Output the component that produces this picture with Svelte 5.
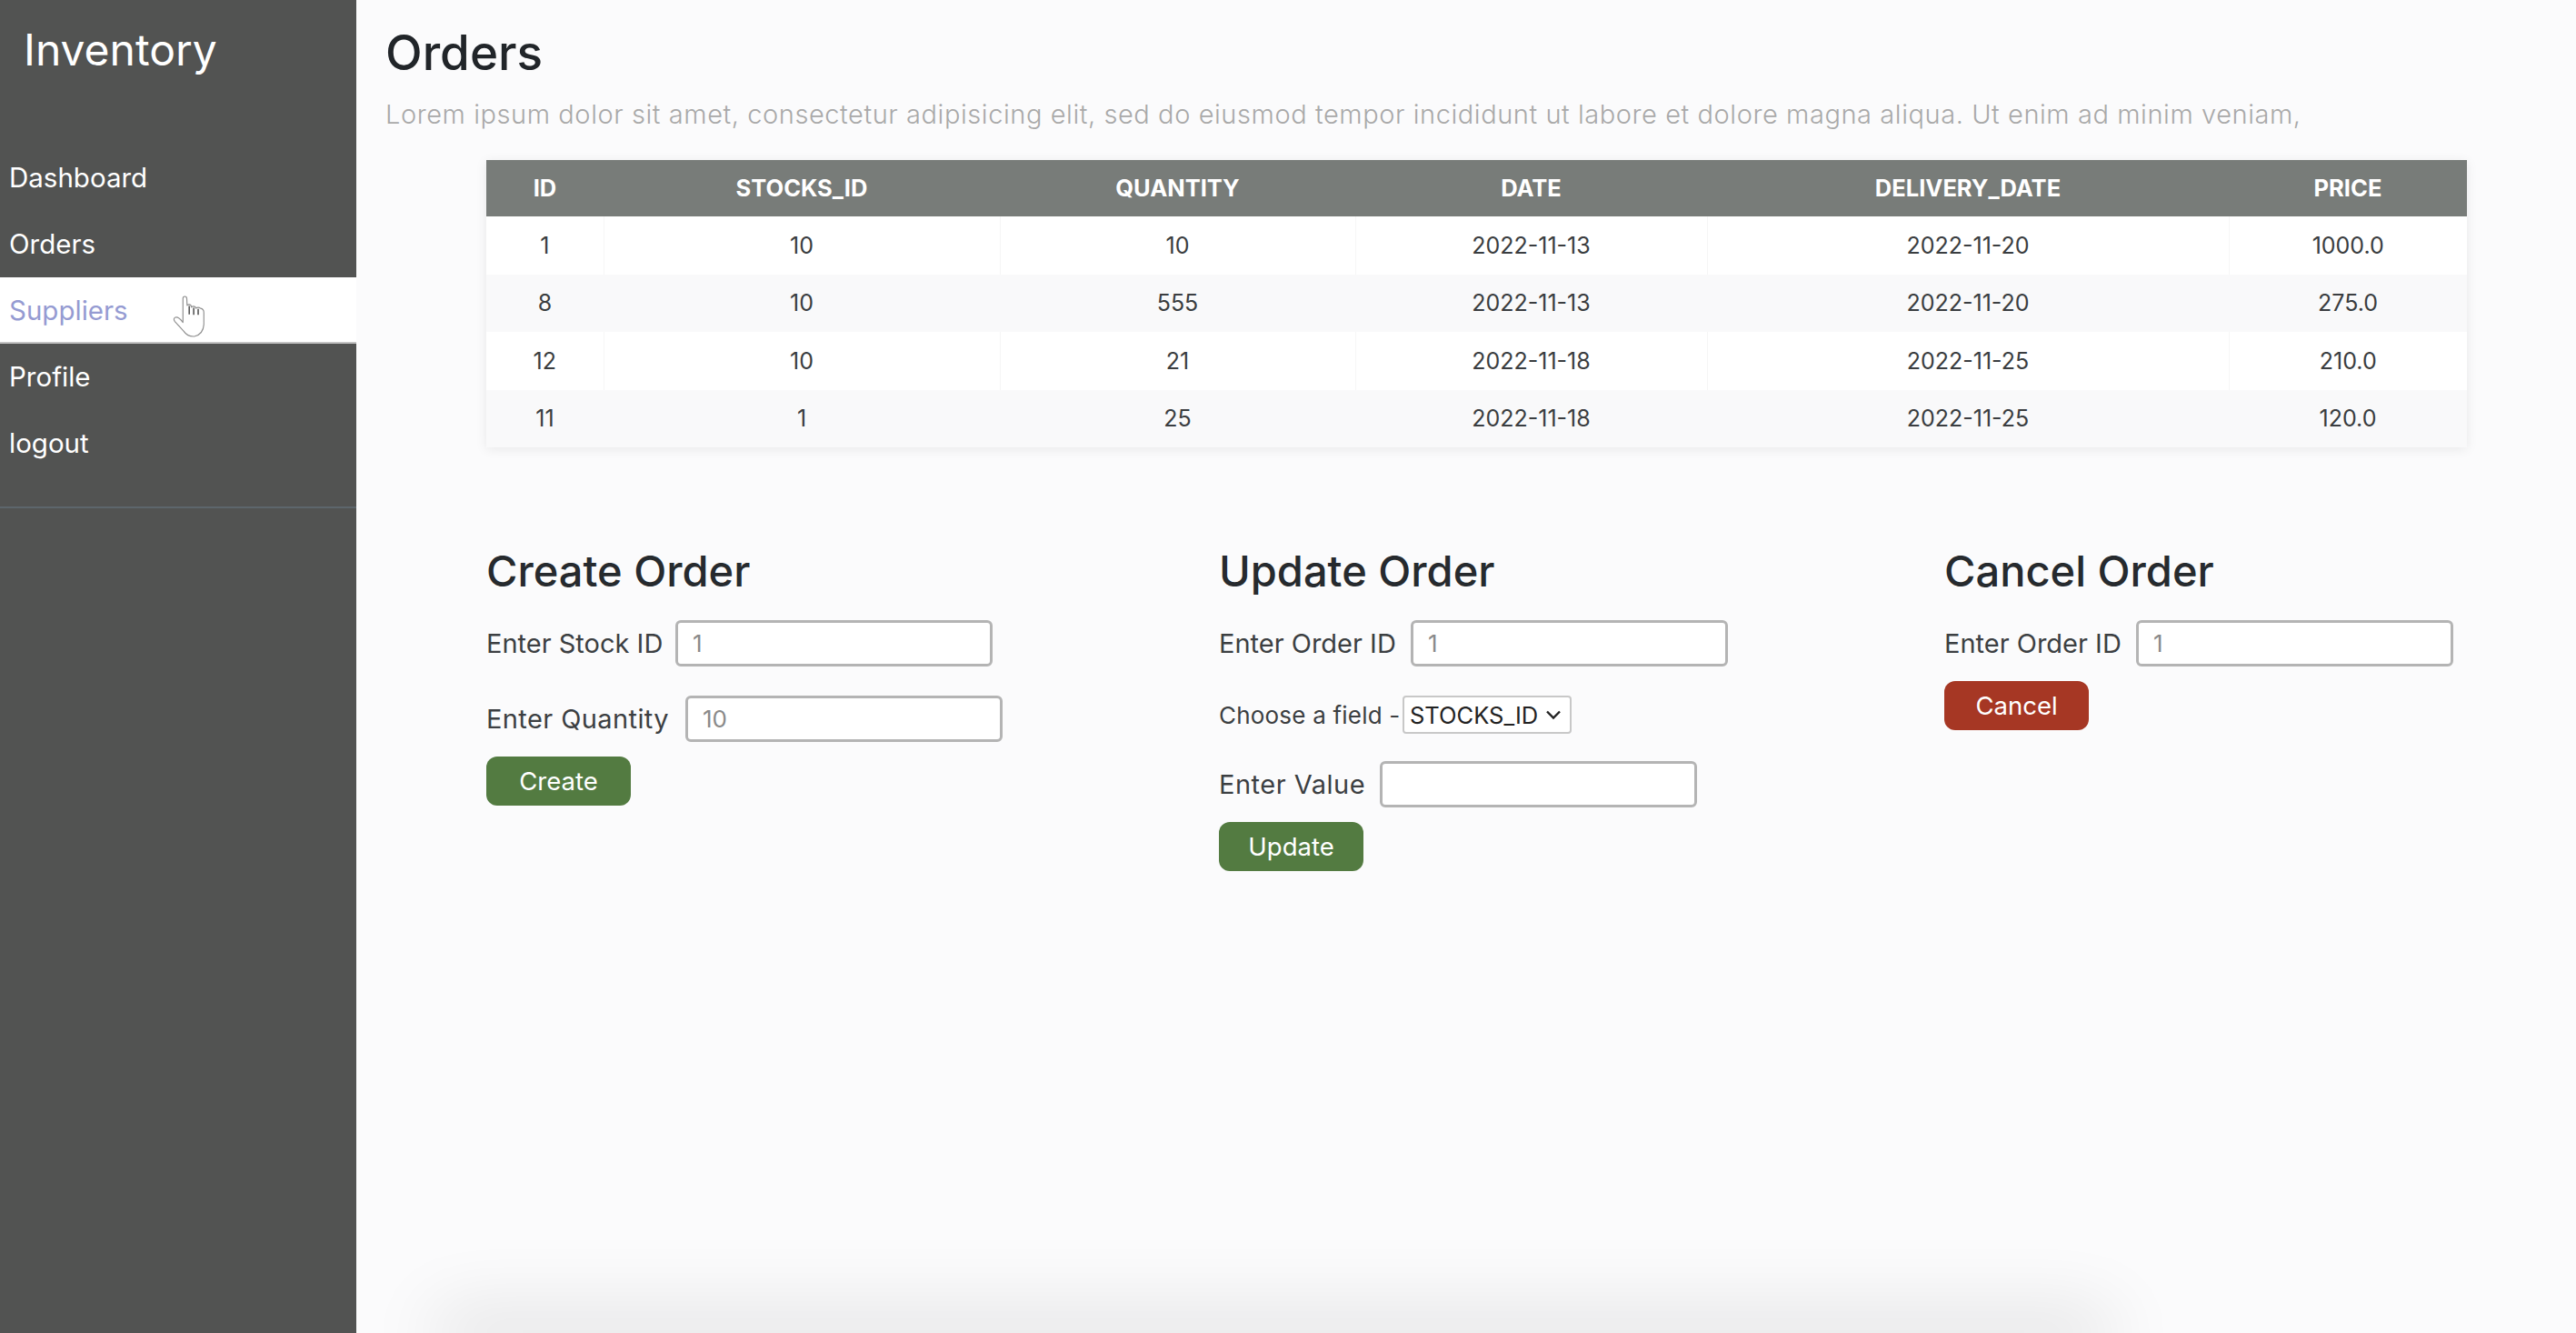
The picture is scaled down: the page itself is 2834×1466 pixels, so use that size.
<script>
	const navItems = ['Dashboard', 'Orders', 'Suppliers', 'Profile', 'logout'];
	const columns = ['ID', 'STOCKS_ID', 'QUANTITY', 'DATE', 'DELIVERY_DATE', 'PRICE'];
	const orders = [
		{ id: 1, stock: 10, qty: 10, date: '2022-11-13', delivery: '2022-11-20', price: '1000.0' },
		{ id: 8, stock: 10, qty: 555, date: '2022-11-13', delivery: '2022-11-20', price: '275.0' },
		{ id: 12, stock: 10, qty: 21, date: '2022-11-18', delivery: '2022-11-25', price: '210.0' },
		{ id: 11, stock: 1, qty: 25, date: '2022-11-18', delivery: '2022-11-25', price: '120.0' }
	];
</script>

<div class="layout">
	<aside class="sidebar">
		<div class="brand">Inventory</div>
		<nav>
			{#each navItems as item}
				<a href="#top" class="nav-item" class:active={item === 'Suppliers'}>
					{item}
					{#if item === 'Suppliers'}
						<!-- mouse pointer caught in the screenshot -->
						<svg class="cursor" viewBox="60 72 112 146" width="37" height="48">
							<path
								d="M97 86 Q97 78 103 78 Q110 78 110 86 L111 108 Q118 102 124 108 L125 114 Q132 108 139 114 L140 118 Q148 112 156 118 Q167 120 167 132 L167 172 Q165 205 135 212 Q112 213 100 195 L70 162 Q63 152 72 148 Q82 145 97 165 Z"
								fill="#fff"
								stroke="#8f8f8f"
								stroke-width="3.5"
								stroke-linejoin="round"
							/>
							<path d="M118 110 V138 M133 116 V140 M148 120 V140" fill="none" stroke="#333" stroke-width="4" />
						</svg>
					{/if}
				</a>
			{/each}
		</nav>
		<hr />
	</aside>

	<main class="content">
		<h1>Orders</h1>
		<p class="lead">Lorem ipsum dolor sit amet, consectetur adipisicing elit, sed do eiusmod tempor incididunt ut labore et dolore magna aliqua. Ut enim ad minim veniam,</p>

		<div class="inner">
			<table>
				<thead>
					<tr>
						{#each columns as col}
							<th>{col}</th>
						{/each}
					</tr>
				</thead>
				<tbody>
					{#each orders as o}
						<tr>
							<td>{o.id}</td>
							<td>{o.stock}</td>
							<td>{o.qty}</td>
							<td>{o.date}</td>
							<td>{o.delivery}</td>
							<td>{o.price}</td>
						</tr>
					{/each}
				</tbody>
			</table>

			<section class="forms">
				<form>
					<h2>Create Order</h2>
					<div class="field">
						<label class="stock" for="stock">Enter Stock ID</label>
						<input id="stock" placeholder="1" />
					</div>
					<div class="field">
						<label class="quantity" for="qty">Enter Quantity</label>
						<input id="qty" placeholder="10" />
					</div>
					<button type="button" class="btn green">Create</button>
				</form>

				<form>
					<h2>Update Order</h2>
					<div class="field">
						<label class="order" for="order">Enter Order ID</label>
						<input id="order" placeholder="1" />
					</div>
					<div class="field pick">
						<label for="column">Choose a field -</label>
						<select id="column">
							<option>STOCKS_ID</option>
						</select>
					</div>
					<div class="field">
						<label class="value" for="value">Enter Value</label>
						<input id="value" />
					</div>
					<button type="button" class="btn green">Update</button>
				</form>

				<form>
					<h2>Cancel Order</h2>
					<div class="field">
						<label class="order" for="cancel">Enter Order ID</label>
						<input id="cancel" placeholder="1" />
					</div>
					<button type="button" class="btn red">Cancel</button>
				</form>
			</section>
		</div>

		<div class="footer-shadow"></div>
	</main>
</div>

<style>
	:global(body) {
		margin: 0;
		background: #fbfbfc;
		font-family: Inter, 'Noto Sans', sans-serif;
		overflow: hidden;
	}

	.layout {
		display: flex;
		height: 100vh;
	}

	/* sidebar */
	.sidebar {
		width: 392px;
		flex-shrink: 0;
		background: #525352;
		position: relative;
		z-index: 1;
	}

	.brand {
		height: 159px;
		box-sizing: border-box;
		padding: 25px 0 0 26px;
		font-size: 48px;
		line-height: 60px;
		font-weight: 400;
		color: #fff;
	}

	.nav-item {
		display: block;
		position: relative;
		height: 73px;
		box-sizing: border-box;
		padding-left: 10px;
		line-height: 73px;
		font-size: 29.5px;
		color: #fff;
		text-decoration: none;
	}

	.nav-item.active {
		background: #fff;
		color: #959bd2;
		border-bottom: 2px solid #c4c4c4;
	}

	.cursor {
		position: absolute;
		left: 189px;
		top: 19px;
	}

	hr {
		margin: 33px 0 0;
		border: 0;
		border-top: 2px solid #5d666c;
	}

	/* main area */
	.content {
		flex: 1;
		min-width: 0;
		display: flex;
		flex-direction: column;
		padding: 0 0 0 32px;
		overflow: hidden;
	}

	h1 {
		margin: 26px 0 0;
		font-size: 53px;
		line-height: 64px;
		font-weight: 500;
		color: #212529;
	}

	.lead {
		margin: 14px 0 0;
		font-size: 29px;
		letter-spacing: 0.57px;
		line-height: 44px;
		font-weight: 300;
		color: #a9a9a9;
		white-space: nowrap;
	}

	.inner {
		margin: 28px 0 0 111px;
		width: 2179px;
	}

	/* table */
	table {
		width: 100%;
		table-layout: fixed;
		border-collapse: collapse;
		box-shadow: 0 2px 12px rgba(0, 0, 0, 0.08);
		background: #fff;
	}

	th {
		height: 62px;
		padding: 0 0 2px;
		box-sizing: border-box;
		background: #787c79;
		color: #fff;
		font-size: 25.5px;
		font-weight: 700;
	}

	td {
		height: 63.5px;
		padding: 0;
		text-align: center;
		font-size: 25px;
		color: #3a3d40;
		border-left: 1px solid #f6f6f6;
	}

	td:first-child {
		border-left: 0;
	}

	tbody tr:nth-child(even) {
		background: #f9f9fa;
	}

	tbody tr:nth-child(even) td {
		border-left: 0;
	}

	th:nth-child(1) { width: 129px; }
	th:nth-child(2) { width: 436px; }
	th:nth-child(3) { width: 391px; }
	th:nth-child(4) { width: 387px; }
	th:nth-child(5) { width: 574px; }

	/* forms */
	.forms {
		display: grid;
		grid-template-columns: 806px 798px 1fr;
		margin-top: 104px;
	}

	h2 {
		margin: 0 0 22px;
		font-size: 47px;
		line-height: 64px;
		font-weight: 500;
		color: #262a2e;
	}

	.field {
		display: flex;
		align-items: center;
		margin-bottom: 32px;
		font-size: 29px;
		color: #3c3f42;
	}

	.field:has(+ .btn) {
		margin-bottom: 16px;
	}

	/* labels are set to the width that puts each input on its spot */
	.stock { width: 208px; }
	.quantity { width: 219px; letter-spacing: 0.4px; }
	.order { width: 211px; }
	.value { width: 177px; letter-spacing: 0.5px; }

	.field.pick {
		font-size: 26px;
		margin-bottom: 30px;
	}

	.field.pick label {
		width: 202px;
		letter-spacing: 0.2px;
	}

	input {
		width: 349px;
		height: 51px;
		box-sizing: border-box;
		padding: 0 16px;
		border: 3px solid #b4b4b4;
		border-radius: 6px;
		background: #fff;
		font: inherit;
		font-size: 26px;
	}

	input::placeholder {
		color: #8a8a8a;
	}

	select {
		appearance: none;
		width: 186px;
		height: 42px;
		padding: 0 2px 0 6px;
		border: 2px solid #c8c8c8;
		border-radius: 4px;
		background: #fff url("data:image/svg+xml,%3Csvg xmlns='http://www.w3.org/2000/svg' width='18' height='12' viewBox='0 0 18 12'%3E%3Cpath d='M2 2.5 L9 9.5 L16 2.5' fill='none' stroke='%23222' stroke-width='2.4'/%3E%3C/svg%3E") no-repeat right 9px center;
		font: inherit;
		font-size: 25.5px;
		color: #222;
	}

	.btn {
		display: block;
		width: 159px;
		height: 54px;
		padding: 0;
		border: 0;
		border-radius: 12px;
		font: inherit;
		font-size: 27.5px;
		color: #fff;
	}

	.green {
		background: #537b41;
	}

	.red {
		background: #a63724;
	}

	/* shadow of something that sits just below the fold */
	.footer-shadow {
		flex-shrink: 0;
		margin: auto 0 0 76px;
		width: 1802px;
		height: 0;
		box-shadow: 0 0 80px 20px rgba(0, 0, 0, 0.14);
	}
</style>
